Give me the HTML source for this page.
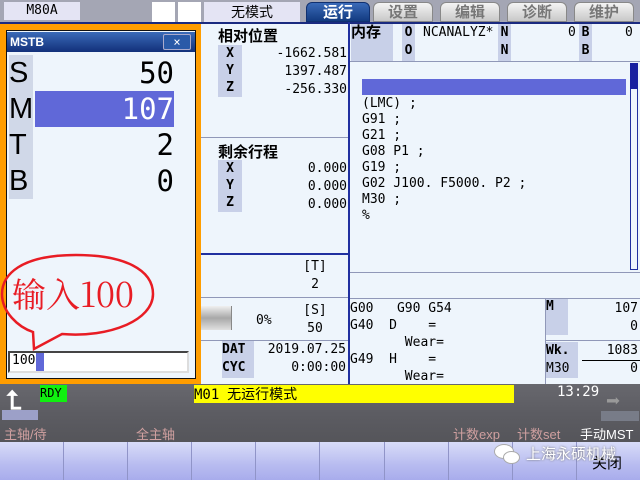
<!DOCTYPE html><html><head><meta charset="utf-8"><style>
*{margin:0;padding:0;box-sizing:border-box}
body{width:640px;height:480px;overflow:hidden;background:#eef5fc;font-family:"DejaVu Sans Mono","Liberation Mono","Noto Sans CJK SC",monospace;position:relative}
.a{position:absolute}
.cj{font-family:"Liberation Sans","Noto Sans CJK SC",sans-serif}
.tab{position:absolute;top:2px;height:20px;border-radius:6px 6px 0 0;background:linear-gradient(#f4f4f4,#c8c8c8);border:1px solid #888;color:#777;font-size:15px;text-align:center;line-height:19px;font-family:"Liberation Sans","Noto Sans CJK SC",sans-serif;font-weight:bold}
.lab{background:#c8d0e8;font-weight:bold;font-size:13px;text-align:center}
.t13{font-size:13px}
.r{text-align:right}
</style></head><body>
<!-- top bar -->
<div class="a" style="left:0;top:0;width:640px;height:22px;background:#a4a6b4"></div>
<div class="a" style="left:4px;top:2px;width:76px;height:18px;background:#e4e4f4;font-size:13px;text-align:center;line-height:18px">M80A</div>
<div class="a" style="left:152px;top:2px;width:23px;height:20px;background:#fff"></div>
<div class="a" style="left:178px;top:2px;width:23px;height:20px;background:#fff"></div>
<div class="a cj" style="left:204px;top:2px;width:96px;height:20px;background:#e4e4f4;font-size:14px;text-align:center;line-height:20px">无模式</div>
<div class="tab" style="left:306px;width:64px;background:linear-gradient(#3a6ab8,#123a80);color:#fff;border-color:#103070">运行</div>
<div class="tab" style="left:373px;width:60px">设置</div>
<div class="tab" style="left:440px;width:60px">编辑</div>
<div class="tab" style="left:507px;width:60px">诊断</div>
<div class="tab" style="left:574px;width:60px">维护</div>
<div class="a" style="left:0;top:22px;width:640px;height:2px;background:#1a2a80"></div>

<!-- middle column -->
<div class="a cj" style="left:218px;top:25px;font-size:15px;font-weight:bold">相对位置</div>
<div class="a lab" style="left:218px;top:45px;width:24px;height:52px;line-height:17px">X<br>Y<br>Z</div>
<div class="a t13 r" style="left:240px;top:45px;width:107px;line-height:18px">-1662.581<br>1397.487<br>-256.330</div>
<div class="a" style="left:200px;top:137px;width:148px;height:1px;background:#9098b8"></div>
<div class="a cj" style="left:218px;top:141px;font-size:15px;font-weight:bold">剩余行程</div>
<div class="a lab" style="left:218px;top:160px;width:24px;height:52px;line-height:17px">X<br>Y<br>Z</div>
<div class="a t13 r" style="left:240px;top:160px;width:107px;line-height:18px">0.000<br>0.000<br>0.000</div>
<div class="a" style="left:200px;top:253px;width:150px;height:2px;background:#2030a0"></div>
<div class="a t13" style="left:300px;top:258px;width:30px;text-align:center;line-height:18px">[T]<br>2</div>
<div class="a" style="left:200px;top:297px;width:148px;height:1px;background:#9098b8"></div>
<div class="a" style="left:200px;top:306px;width:32px;height:24px;background:linear-gradient(#f0f0f0,#a8a8a8,#e0e0e0);border-right:1px solid #888"></div>
<div class="a t13" style="left:256px;top:313px">0%</div>
<div class="a t13" style="left:300px;top:302px;width:30px;text-align:center;line-height:18px">[S]<br>50</div>
<div class="a" style="left:200px;top:340px;width:148px;height:1px;background:#9098b8"></div>
<div class="a lab" style="left:222px;top:341px;width:32px;height:37px;line-height:18px;text-align:left">DAT<br>CYC</div>
<div class="a t13 r" style="left:250px;top:341px;width:96px;line-height:18px">2019.07.25<br>0:00:00</div>

<!-- right column -->
<div class="a" style="left:348px;top:22px;width:2px;height:362px;background:#2030a0"></div>
<div class="a lab cj" style="left:351px;top:24px;width:42px;height:37px;font-size:15px;text-align:left;line-height:18px">内存</div>
<div class="a lab" style="left:402px;top:24px;width:13px;height:37px;line-height:18px">O<br>O</div>
<div class="a t13" style="left:423px;top:25px">NCANALYZ*</div>
<div class="a lab" style="left:498px;top:24px;width:13px;height:37px;line-height:18px">N<br>N</div>
<div class="a t13" style="left:568px;top:25px">0</div>
<div class="a lab" style="left:579px;top:24px;width:13px;height:37px;line-height:18px">B<br>B</div>
<div class="a t13" style="left:625px;top:25px">0</div>
<div class="a" style="left:350px;top:61px;width:290px;height:1px;background:#9098b8"></div>
<div class="a" style="left:362px;top:79px;width:264px;height:16px;background:#6068d8"></div>
<div class="a t13" style="left:362px;top:96px;line-height:16px;white-space:pre">(LMC) ;
G91 ;
G21 ;
G08 P1 ;
G19 ;
G02 J100. F5000. P2 ;
M30 ;
%</div>
<div class="a" style="left:630px;top:63px;width:8px;height:207px;border:1px solid #2030a0;background:#eef5fc"></div>
<div class="a" style="left:630px;top:63px;width:8px;height:26px;background:#1820a0"></div>
<div class="a" style="left:350px;top:272px;width:290px;height:1px;background:#9098b8"></div>
<div class="a" style="left:350px;top:298px;width:290px;height:1px;background:#9098b8"></div>
<div class="a t13" style="left:350px;top:300px;line-height:17px;white-space:pre">G00   G90 G54
G40  D    =
       Wear=
G49  H    =
       Wear=</div>
<div class="a" style="left:545px;top:298px;width:1px;height:86px;background:#9098b8"></div>
<div class="a lab" style="left:546px;top:299px;width:22px;height:36px;text-align:left">M</div>
<div class="a t13 r" style="left:570px;top:300px;width:68px;line-height:18px">107<br>0</div>
<div class="a" style="left:546px;top:340px;width:94px;height:1px;background:#9098b8"></div>
<div class="a lab" style="left:546px;top:342px;width:32px;height:36px;text-align:left;line-height:18px">Wk.<br><span style="font-weight:normal">M30</span></div>
<div class="a t13 r" style="left:580px;top:342px;width:58px;line-height:18px">1083<br>0</div>
<div class="a" style="left:582px;top:360px;width:58px;height:1px;background:#000"></div>

<!-- MSTB window -->
<div class="a" style="left:0;top:24px;width:201px;height:360px;background:#ff9d00"></div>
<div class="a" style="left:6px;top:30px;width:190px;height:349px;background:#eef5fc;border:1px solid #111"></div>
<div class="a" style="left:7px;top:32px;width:188px;height:20px;background:linear-gradient(#3a6ab8,#12307a);color:#fff;font-weight:bold;font-size:12px;line-height:20px;padding-left:3px;font-family:'Liberation Sans',sans-serif">MSTB</div>
<div class="a" style="left:163px;top:34px;width:28px;height:16px;border:1px solid #aac;border-radius:2px;background:#2a5aa8;color:#fff;font-size:12px;text-align:center;line-height:14px">×</div>
<div class="a" style="left:9px;top:55px;width:24px;height:144px;background:#d0d8e8"></div>
<div class="a" style="left:9px;top:55px;font-family:'Liberation Sans',sans-serif;font-size:29px;line-height:36px">S<br>M<br>T<br>B</div>
<div class="a" style="left:35px;top:91px;width:139px;height:36px;background:#6068d8"></div>
<div class="a r" style="left:60px;top:55px;width:114px;font-size:29px;line-height:36px;font-family:'DejaVu Sans Mono',monospace">50<br><span style="color:#fff">107</span><br>2<br>0</div>
<svg class="a" style="left:0;top:250px" width="200" height="110">
<path d="M76 5 C20 5 2 25 2 44 C2 62 18 77 33 82 L34 99 L62 84 C110 88 153 70 153 44 C153 20 125 5 76 5Z" fill="none" stroke="#e81c24" stroke-width="2.5"/>
</svg>
<div class="a" style="left:12px;top:268px;color:#e81c24;font-size:34px;font-family:'Noto Serif CJK SC','Liberation Serif',serif">输入100</div>
<div class="a" style="left:8px;top:351px;width:181px;height:22px;background:#fff;border-top:2px solid #444;border-left:2px solid #444;border-right:2px solid #ddd;border-bottom:2px solid #ddd"></div>
<div class="a t13" style="left:12px;top:353px">100</div>
<div class="a" style="left:36px;top:353px;width:8px;height:18px;background:#6068d8"></div>

<!-- status bar -->
<div class="a" style="left:0;top:384px;width:640px;height:58px;background:linear-gradient(#68686e 0,#5c5c62 30px,#55555a 100%)"></div>
<div class="a" style="left:40px;top:385px;width:27px;height:17px;background:#10f010;font-size:12px;line-height:17px">RDY</div>
<div class="a cj" style="left:194px;top:385px;width:320px;height:18px;background:#ffff00;font-size:14px;line-height:18px;white-space:pre"><span style="font-family:'DejaVu Sans Mono'">M01</span>  无运行模式</div>
<div class="a" style="left:557px;top:384px;color:#fff;font-size:14px">13:29</div>
<div class="a" style="left:2px;top:410px;width:36px;height:10px;background:#9ca0c8"></div>
<div class="a" style="left:6px;top:388px;color:#fff;font-size:26px;font-weight:bold;line-height:26px">⮤</div>
<div class="a" style="left:601px;top:411px;width:38px;height:10px;background:#787c88"></div>
<div class="a" style="left:606px;top:388px;color:#999;font-size:24px;line-height:26px">➡</div>
<div class="a cj" style="left:4px;top:424px;color:#d0a0a0;font-size:13px">主轴/待</div>
<div class="a cj" style="left:136px;top:424px;color:#d0a0a0;font-size:13px">全主轴</div>
<div class="a cj" style="left:453px;top:424px;color:#d0a0a0;font-size:13px">计数exp</div>
<div class="a cj" style="left:517px;top:424px;color:#d0a0a0;font-size:13px">计数set</div>
<div class="a cj" style="left:580px;top:424px;color:#fff;font-size:13px">手动MST</div>
<!-- softkeys -->
<div class="a" style="left:0;top:442px;width:640px;height:38px;background:linear-gradient(#d8dcf8,#b8bcf0 60%,#a8acec);display:flex">
<div style="flex:1;border-right:1px solid #9094c8"></div><div style="flex:1;border-right:1px solid #9094c8"></div><div style="flex:1;border-right:1px solid #9094c8"></div><div style="flex:1;border-right:1px solid #9094c8"></div><div style="flex:1;border-right:1px solid #9094c8"></div><div style="flex:1;border-right:1px solid #9094c8"></div><div style="flex:1;border-right:1px solid #9094c8"></div><div style="flex:1;border-right:1px solid #9094c8"></div><div style="flex:1;border-right:1px solid #9094c8"></div><div style="flex:1"></div></div>
<div class="a cj" style="left:592px;top:452px;font-size:15px">关闭</div>
<div class="a" style="left:494px;top:444px;width:20px;height:15px;border-radius:50%;background:#fff;border:1px solid #aaa"></div>
<div class="a" style="left:503px;top:451px;width:17px;height:13px;border-radius:50%;background:#fff;border:1px solid #aaa"></div>
<div class="a cj" style="left:526px;top:443px;color:#fff;font-size:15px;text-shadow:0 0 2px #666">上海永硕机械</div>
</body></html>
